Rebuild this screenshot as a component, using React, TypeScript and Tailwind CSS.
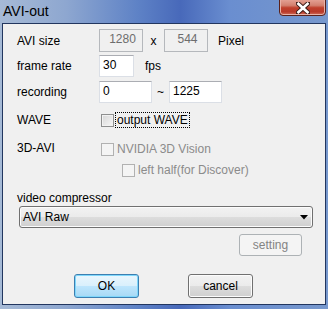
import React from 'react'

const font = { fontFamily: '"Liberation Sans", Arial, sans-serif' }

const TextBox = ({ value, width, disabled, center }: {
  value: string;
  width: string;
  disabled?: boolean;
  center?: boolean;
}) => (
  <div
    className={`${width} h-full border pl-[3px] pt-[2px] text-[12px] leading-[14px] ${center ? 'text-center pl-0' : ''} ${disabled
      ? 'border-[#b5b8bc] bg-[#f0f0f0] text-[#6d6d6d]'
      : 'border-[#dbdfe6] border-t-[#abadb3] bg-white text-black'
      }`}
  >
    {value}
  </div>
)

const CheckBox = ({ disabled }: { disabled?: boolean }) => (
  <div
    className={`w-[13px] h-[13px] border shrink-0 ${disabled
      ? 'border-[#b1b1b1] bg-[#f4f4f4]'
      : 'border-[#8e8f8f] bg-[linear-gradient(135deg,#d6d6d6,#f7f7f7)] shadow-[inset_0_0_0_1px_#f2f2f2]'
      }`}
  />
)

const Button = ({ label, width, primary, disabled }: {
  label: string;
  width: string;
  primary?: boolean;
  disabled?: boolean;
}) => {
  const look = disabled
    ? 'border-[#adb2b5] bg-[#f4f4f4] text-[#838383]'
    : primary
      ? 'border-[#3c7fb1] bg-[linear-gradient(#eaf6fd_0%,#d9f0fc_50%,#bee6fd_50%,#a7d9f5_100%)] shadow-[inset_0_0_0_1px_#7fd7fb] text-black'
      : 'border-[#707070] bg-[linear-gradient(#f2f2f2_0%,#ebebeb_50%,#dddddd_50%,#cfcfcf_100%)] shadow-[inset_0_0_0_1px_#fcfcfc] text-black'
  return (
    <div className={`${width} h-full border rounded-[3px] flex items-center justify-center text-[12px] ${look}`}>
      {label}
    </div>
  )
}

export default function App() {
  return (
    <div
      style={font}
      className="w-[328px] h-[309px] flex flex-col px-[2px] pb-[4px] bg-[linear-gradient(90deg,#a6bad6_0%,#8ea7d0_20%,#5e82c6_42%,#4869ba_55%,#6a8ed0_70%,#7798cd_100%)]"
    >
      {/* title bar */}
      <div className="h-[23px] flex shrink-0 relative">
        <span className="pl-[1px] pt-[3px] text-[14px] leading-[16px] text-black">AVI-out</span>
        <div className="absolute left-[277px] top-[-2px] w-[47px] h-[18px] rounded-b-[4px] border border-[#5a211b] bg-[linear-gradient(#e6a598_0%,#d3806f_40%,#c0402c_55%,#b8392a_80%,#d0705c_100%)] shadow-[inset_0_0_0_1px_#e9b1a6] flex items-center justify-center pt-[1px]">
          <svg width="14" height="12" viewBox="0 0 14 12">
            <path d="M2 1.5 L12 10.5 M12 1.5 L2 10.5" stroke="#3a1a16" strokeWidth="4.6" strokeLinecap="square" />
            <path d="M2.4 1.8 L11.6 10.2 M11.6 1.8 L2.4 10.2" stroke="#ffffff" strokeWidth="2.6" strokeLinecap="square" />
          </svg>
        </div>
      </div>

      {/* client area */}
      <div className="flex-1 border border-[#22365f] bg-[#f0f0f0] flex flex-col text-[12px] leading-[14px] text-black">
        <div className="flex items-center h-[23px] mt-[5px] pl-[14px]">
          <span className="w-[82px]">AVI size</span>
          <TextBox value="1280" width="w-[44px]" disabled center />
          <span className="w-[21px] text-center">x</span>
          <TextBox value="544" width="w-[44px]" disabled center />
          <span className="ml-[10px]">Pixel</span>
        </div>

        <div className="flex items-center h-[22px] mt-[3px] pl-[14px]">
          <span className="w-[82px]">frame rate</span>
          <TextBox value="30" width="w-[35px]" />
          <span className="ml-[11px]">fps</span>
        </div>

        <div className="flex items-center h-[22px] mt-[4px] pl-[14px]">
          <span className="w-[82px]">recording</span>
          <TextBox value="0" width="w-[53px]" />
          <span className="w-[17px] text-center">~</span>
          <TextBox value="1225" width="w-[53px]" />
        </div>

        <div className="flex items-center h-[16px] mt-[9px] pl-[14px]">
          <span className="w-[84px]">WAVE</span>
          <CheckBox />
          <span className="ml-[1px] h-[16px] px-[1px] border border-dotted border-black flex items-center">output WAVE</span>
        </div>

        <div className="flex items-center h-[16px] mt-[13px] pl-[14px]">
          <span className="w-[84px] self-start">3D-AVI</span>
          <CheckBox disabled />
          <span className="ml-[3px] text-[#8b8b8b]">NVIDIA 3D Vision</span>
        </div>

        <div className="flex items-center h-[16px] mt-[5px] pl-[119px]">
          <CheckBox disabled />
          <span className="ml-[3px] text-[#8b8b8b]">left half(for Discover)</span>
        </div>

        <div className="h-[14px] mt-[13px] pl-[14px]">video compressor</div>

        <div className="h-[22px] mt-[1px] ml-[16px] w-[294px] border border-[#707070] rounded-[3px] bg-[linear-gradient(#f2f2f2_0%,#ebebeb_50%,#dddddd_50%,#cfcfcf_100%)] shadow-[inset_0_0_0_1px_#fcfcfc] flex items-center justify-between pl-[3px] pr-[4px]">
          <span>AVI Raw</span>
          <svg width="8" height="5" viewBox="0 0 8 5">
            <path d="M0 0 H8 L4 4.5 Z" fill="#000" />
          </svg>
        </div>

        <div className="h-[22px] mt-[6px] pl-[236px]">
          <Button label="setting" width="w-[63px]" disabled />
        </div>

        <div className="h-[24px] mt-[18px] pl-[71px] flex gap-[49px]">
          <Button label="OK" width="w-[65px]" primary />
          <Button label="cancel" width="w-[65px]" />
        </div>
      </div>
    </div>
  )
}
